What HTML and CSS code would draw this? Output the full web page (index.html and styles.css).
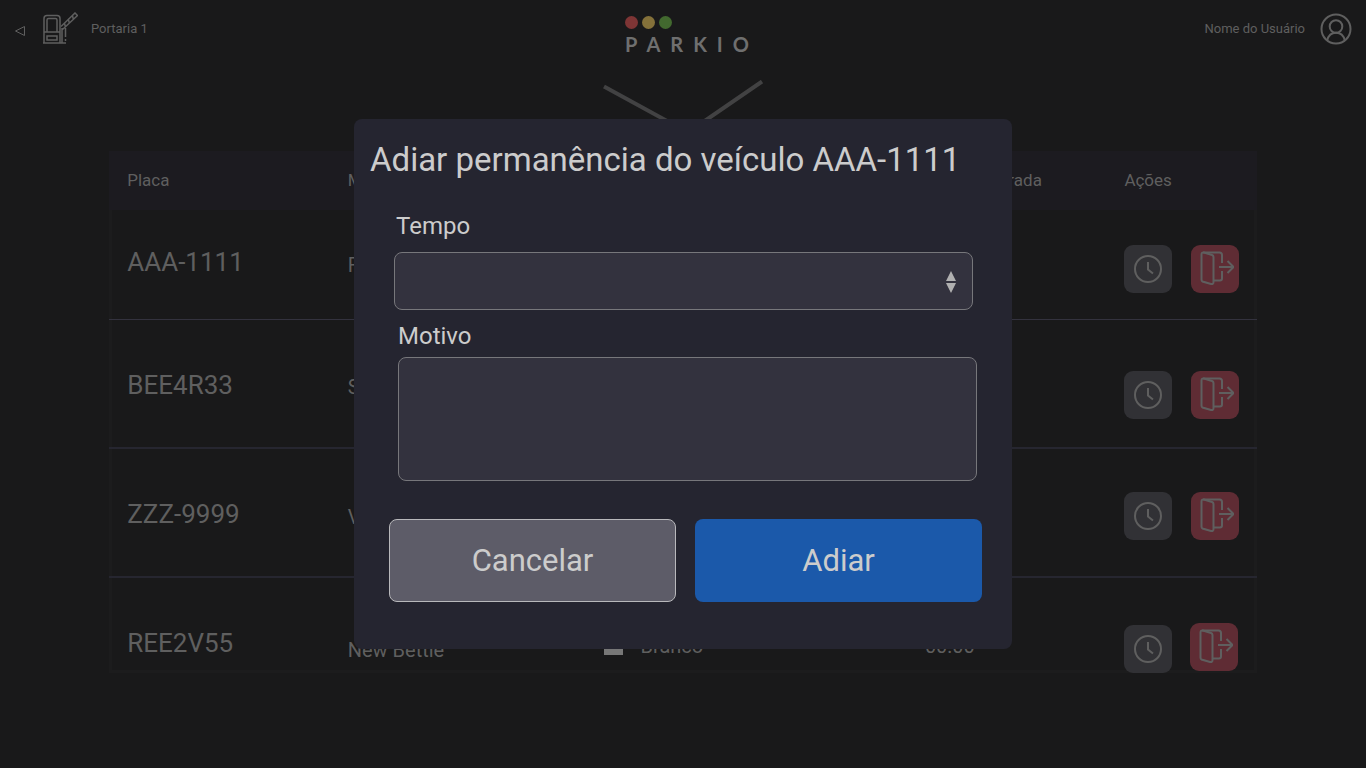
FILE: index.html
```html
<!DOCTYPE html>
<html lang="pt-BR">
<head>
<meta charset="utf-8">
<meta name="viewport" content="width=device-width, initial-scale=1">
<title>Parkio</title>
<link rel="stylesheet" href="styles.css">
</head>
<body>
<svg class="sprite" aria-hidden="true">
  <symbol id="clock" viewBox="0 0 30 30">
    <circle cx="15" cy="15" r="13"/>
    <path d="M15 8v7.500l5 4"/>
  </symbol>
  <symbol id="exit" viewBox="0 0 36 36">
    <path d="M3.500 3.500Q3.500 1 6 1.500L14 4Q15.500 4.500 15.500 6v25q0 2.500-2.500 2L4.500 30.500Q3.500 30 3.500 28.500z"/>
    <path d="M5 1.500h16.500q2.500 0 2.500 2.500V12M24 20v7.500q0 2-2 2h-6M21 16h14M29.500 10l6 6-6 6"/>
  </symbol>
</svg>

<header class="topbar">
  <div class="topbar-side">
    <button class="icon-button back" type="button" aria-label="Voltar">
      <svg width="12" height="12" viewBox="0 0 12 12"><path d="M10.500 1.500v9L1.500 6z"/></svg>
    </button>
    <svg class="gate" width="36" height="34" viewBox="0 0 36 34" aria-hidden="true">
      <path d="M2 31V6.500q0-3 3-3h10q3 0 3 3V31M2 20h16M1 31h23M5 20V8q0-1.500 1.500-1.500h7q1.500 0 1.500 1.500v12M5 24h10v4H5z"/>
      <path d="M19 14.500L33 1l2.500 2.500L20.500 17.500M22.500 11.500l1 3.500M26.500 8l1 3.500M30.500 4l1 3.500M20 16v15M23.500 16v9"/>
      <path d="M23.500 27v2"/>
    </svg>
    <span>Portaria 1</span>
  </div>
  <div class="logo">
    <div class="lights"><i class="light red"></i><i class="light yellow"></i><i class="light green"></i></div>
    <div class="wordmark">PARKIO</div>
  </div>
  <div class="topbar-side end">
    <span>Nome do Usuário</span>
    <svg class="avatar" width="32" height="32" viewBox="0 0 32 32" aria-hidden="true">
      <circle cx="16" cy="16" r="14.500"/><circle cx="16" cy="13.500" r="6.300"/><path d="M7.200 27.500Q9 19.800 16 19.800t8.800 7.700"/>
    </svg>
  </div>
</header>

<main class="content">
  <svg class="chevron" width="162" height="71" viewBox="0 0 162 71" aria-hidden="true"><path d="M2 6.500l84 46 74-51"/></svg>
  <div class="frame">
    <table class="vehicles">
      <thead>
        <tr><th class="col-plate">Placa</th><th class="col-model">Modelo</th><th class="col-color">Cor</th><th class="col-time">Hora de entrada</th><th class="col-actions">Ações</th></tr>
      </thead>
      <tbody>
        <tr class="first">
          <td class="plate">AAA-1111</td><td>Fusca</td><td><span class="color"><i class="swatch"></i>Branco</span></td><td>00:00</td>
          <td><div class="actions"><button class="action" type="button" aria-label="Adiar"><svg width="30" height="30"><use href="#clock"/></svg></button><button class="action leave" type="button" aria-label="Saída"><svg width="36" height="36"><use href="#exit"/></svg></button></div></td>
        </tr>
        <tr class="second">
          <td class="plate">BEE4R33</td><td>Sandero</td><td><span class="color"><i class="swatch"></i>Branco</span></td><td>00:00</td>
          <td><div class="actions"><button class="action" type="button" aria-label="Adiar"><svg width="30" height="30"><use href="#clock"/></svg></button><button class="action leave" type="button" aria-label="Saída"><svg width="36" height="36"><use href="#exit"/></svg></button></div></td>
        </tr>
        <tr class="third">
          <td class="plate">ZZZ-9999</td><td>Voyage</td><td><span class="color"><i class="swatch"></i>Branco</span></td><td>00:00</td>
          <td><div class="actions"><button class="action" type="button" aria-label="Adiar"><svg width="30" height="30"><use href="#clock"/></svg></button><button class="action leave" type="button" aria-label="Saída"><svg width="36" height="36"><use href="#exit"/></svg></button></div></td>
        </tr>
        <tr class="fourth">
          <td class="plate">REE2V55</td><td class="model">New Bettle</td><td><span class="color"><i class="swatch"></i>Branco</span></td><td>00:00</td>
          <td><div class="actions"><button class="action" type="button" aria-label="Adiar"><svg width="30" height="30"><use href="#clock"/></svg></button><button class="action leave" type="button" aria-label="Saída"><svg width="36" height="36"><use href="#exit"/></svg></button></div></td>
        </tr>
      </tbody>
    </table>
  </div>
</main>

<div class="overlay">
  <form class="modal" role="dialog" aria-labelledby="modal-title">
    <h1 class="modal-title" id="modal-title">Adiar permanência do veículo AAA-1111</h1>
    <div class="field time">
      <label for="tempo">Tempo</label>
      <div class="select-wrap">
        <select id="tempo"><option></option></select>
        <svg class="arrows" width="12" height="24" viewBox="0 0 12 24" aria-hidden="true"><path d="M6 1l5 10H1zM1 13h10L6 23z"/></svg>
      </div>
    </div>
    <div class="field reason">
      <label for="motivo">Motivo</label>
      <textarea id="motivo"></textarea>
    </div>
    <div class="modal-actions">
      <button class="button cancel" type="button">Cancelar</button>
      <button class="button confirm" type="button">Adiar</button>
    </div>
  </form>
</div>
</body>
</html>
```

FILE: styles.css
```css
* { box-sizing: border-box; }

body {
  margin: 0;
  height: 100vh;
  display: flex;
  flex-direction: column;
  overflow: hidden;
  background: #19191a;
  color: #5f5f5f;
  font-family: Roboto, "Liberation Sans", sans-serif;
}

svg { fill: none; stroke: currentColor; flex: none; }
.sprite { position: absolute; width: 0; height: 0; }
button { font: inherit; color: inherit; padding: 0; cursor: pointer; }

.topbar {
  display: grid;
  grid-template-columns: 1fr auto 1fr;
  align-items: start;
  padding: 12px 14px 0;
  font-size: 13px;
}
.topbar-side { display: flex; align-items: center; height: 33px; }
.topbar-side.end { justify-content: flex-end; gap: 15px; }
.icon-button { display: flex; border: 0; background: none; }
.back { margin: 4px 16px 0 0; }
.gate { margin-right: 13px; stroke-width: 1.5; }
.avatar { stroke-width: 2; }

.logo { display: flex; flex-direction: column; gap: 2px; padding: 4px 0 0 18px; }
.lights { display: flex; gap: 4px; }
.light { width: 13px; height: 13px; border-radius: 50%; }
.red { background: #7e3535; }
.yellow { background: #84713a; }
.green { background: #42692f; }
.wordmark {
  font-family: Lato, sans-serif;
  font-size: 20px;
  font-weight: 700;
  line-height: 26px;
  letter-spacing: 10px;
  color: #6f6f6f;
}

.content {
  flex: 1;
  min-height: 0;
  display: flex;
  flex-direction: column;
  padding: 23px 8% 95px;
}
.chevron { align-self: center; stroke: #424243; stroke-width: 4; }
.frame { flex: 1; min-height: 0; overflow: hidden; box-shadow: inset 0 0 0 3px #1c1c1d; }

.vehicles { width: 100%; table-layout: fixed; border-collapse: collapse; font-size: 20px; }
.vehicles th {
  height: 59px;
  padding: 0 0 2px 17px;
  background: #1c1b20;
  text-align: left;
  font-size: 17px;
  font-weight: 400;
}
.col-plate { width: 19.3%; }
.col-model { width: 22.3%; }
.col-color { width: 28%; }
.col-time { width: 17.3%; }
.vehicles .col-time { padding-left: 13px; }
.vehicles .col-plate, .vehicles .col-actions { padding-left: 18px; }
.vehicles td { height: 129px; padding: 8px 0 0 17px; border-bottom: 2px solid #262630; }
.vehicles .first td { height: 109px; padding-top: 2px; border-bottom: 1px solid #33323e; }
.vehicles .plate { padding: 3px 0 0 18px; font-size: 26px; }
.vehicles .first .plate { padding: 0 0 4px 18px; }
.vehicles .model { padding-top: 16px; }
.vehicles td:last-child { padding: 0 0 0 18px; }
.color { display: flex; align-items: center; gap: 18px; }
.swatch { width: 19px; height: 19px; background: #777; }

.actions { display: flex; gap: 19px; }
.first .actions { padding-top: 10px; }
.second .actions { padding-top: 23px; }
.third .actions { padding-top: 6px; }
.fourth .actions { padding-top: 15px; gap: 18px; }
.action {
  display: grid;
  place-items: center;
  width: 48px;
  height: 48px;
  border: 0;
  border-radius: 9px;
  background: #313135;
  stroke-width: 2;
}
.leave { background: #5f2c34; }
.leave svg { margin-left: 2px; }
.fourth .leave { margin-top: -2px; }

.overlay { position: fixed; inset: 0; display: grid; place-items: center; }
.modal {
  width: 658px;
  max-width: 100%;
  padding: 21px 30px 47px 35px;
  border-radius: 8px;
  background: #252530;
  color: #ccc;
}
.modal-title { margin: 0 -19px 32px; font-size: 33px; line-height: 40px; font-weight: 400; }
.field { display: flex; flex-direction: column; font-size: 24px; line-height: 28px; }
.time { margin: 0 9px 12px 5px; gap: 12px; }
.time label { padding-left: 2px; }
.reason { margin: 0 5px 38px 9px; gap: 7px; }
.select-wrap { position: relative; }
.select-wrap select, .reason textarea {
  display: block;
  width: 100%;
  padding: 8px 16px;
  border: 1px solid #77777b;
  border-radius: 8px;
  background: #33323e;
  color: inherit;
  font: inherit;
}
.select-wrap select { height: 58px; appearance: none; }
.reason textarea { height: 124px; resize: none; }
.arrows { position: absolute; right: 16px; top: 18px; fill: #b0b0b0; stroke: none; pointer-events: none; }

.modal-actions { display: grid; grid-template-columns: 1fr 1fr; gap: 19px; }
.button { height: 83px; border: 0; border-radius: 8px; font-size: 31px; }
.cancel { border: 1px solid #b8b8bb; background: #5d5c68; }
.confirm { background: #1b59aa; }
```
